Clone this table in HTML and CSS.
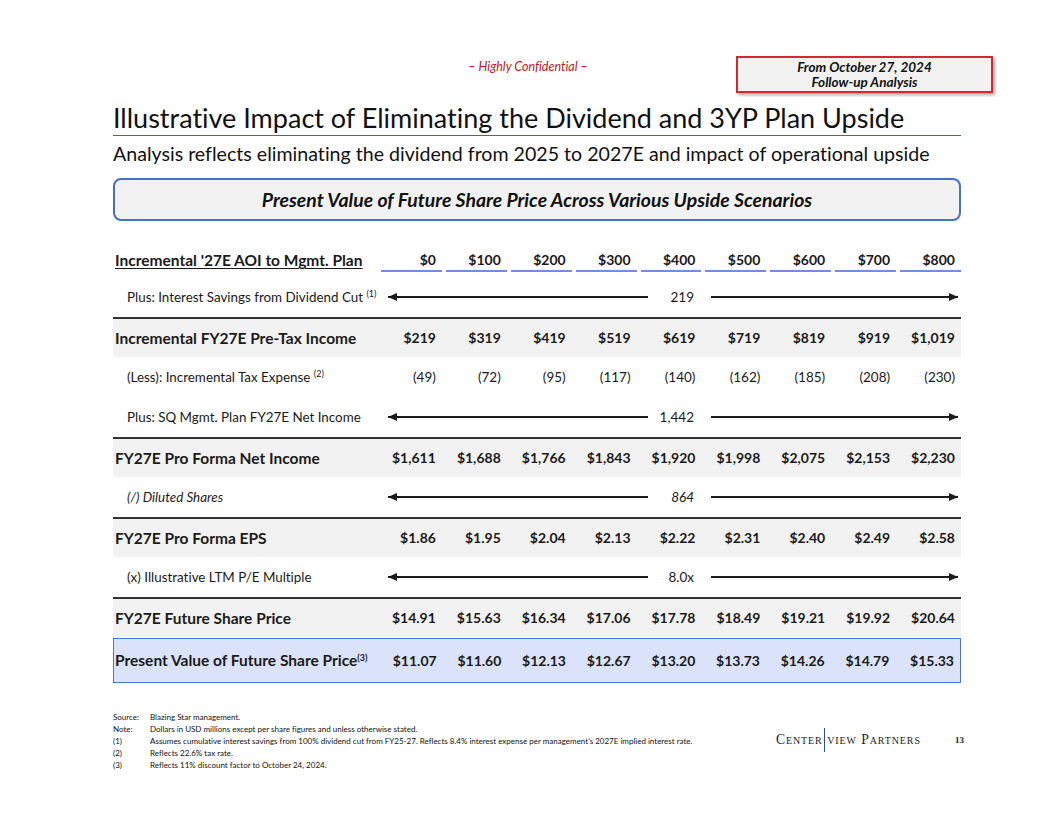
FILE: index.html
```html
<!DOCTYPE html>
<html lang="en">
<head>
<meta charset="utf-8">
<title>Illustrative Impact of Eliminating the Dividend</title>
<link rel="stylesheet" href="styles.css">
</head>
<body>
<div class="page">
  <header class="topbar">
    <div class="spacer"></div>
    <div class="confidential">– Highly Confidential –</div>
    <div class="stamp">From October 27, 2024<br>Follow-up Analysis</div>
  </header>

  <main class="content">
    <h1 class="title">Illustrative Impact of Eliminating the Dividend and 3YP Plan Upside</h1>
    <p class="subtitle">Analysis reflects eliminating the dividend from 2025 to 2027E and impact of operational upside</p>
    <div class="banner">Present Value of Future Share Price Across Various Upside Scenarios</div>

    <div class="table">
      <div class="row head">
        <div class="label"><span class="ul">Incremental '27E AOI to Mgmt. Plan</span></div>
        <div class="cell">$0</div><div class="cell">$100</div><div class="cell">$200</div>
        <div class="cell">$300</div><div class="cell">$400</div><div class="cell">$500</div>
        <div class="cell">$600</div><div class="cell">$700</div><div class="cell">$800</div>
      </div>

      <div class="row first">
        <div class="label sub">Plus: Interest Savings from Dividend Cut <sup>(1)</sup></div>
        <div class="span">
          <div class="arrow left"></div><div class="mid">219</div><div class="arrow right"></div>
        </div>
      </div>

      <div class="row total">
        <div class="label">Incremental FY27E Pre-Tax Income</div>
        <div class="cell">$219</div><div class="cell">$319</div><div class="cell">$419</div>
        <div class="cell">$519</div><div class="cell">$619</div><div class="cell">$719</div>
        <div class="cell">$819</div><div class="cell">$919</div><div class="cell">$1,019</div>
      </div>

      <div class="row">
        <div class="label sub">(Less): Incremental Tax Expense <sup>(2)</sup></div>
        <div class="cell reg">(49)</div><div class="cell reg">(72)</div><div class="cell reg">(95)</div>
        <div class="cell reg">(117)</div><div class="cell reg">(140)</div><div class="cell reg">(162)</div>
        <div class="cell reg">(185)</div><div class="cell reg">(208)</div><div class="cell reg">(230)</div>
      </div>

      <div class="row">
        <div class="label sub">Plus: SQ Mgmt. Plan FY27E Net Income</div>
        <div class="span">
          <div class="arrow left"></div><div class="mid">1,442</div><div class="arrow right"></div>
        </div>
      </div>

      <div class="row total">
        <div class="label">FY27E Pro Forma Net Income</div>
        <div class="cell">$1,611</div><div class="cell">$1,688</div><div class="cell">$1,766</div>
        <div class="cell">$1,843</div><div class="cell">$1,920</div><div class="cell">$1,998</div>
        <div class="cell">$2,075</div><div class="cell">$2,153</div><div class="cell">$2,230</div>
      </div>

      <div class="row">
        <div class="label sub it">(/) Diluted Shares</div>
        <div class="span">
          <div class="arrow left"></div><div class="mid it">864</div><div class="arrow right"></div>
        </div>
      </div>

      <div class="row total">
        <div class="label">FY27E Pro Forma EPS</div>
        <div class="cell">$1.86</div><div class="cell">$1.95</div><div class="cell">$2.04</div>
        <div class="cell">$2.13</div><div class="cell">$2.22</div><div class="cell">$2.31</div>
        <div class="cell">$2.40</div><div class="cell">$2.49</div><div class="cell">$2.58</div>
      </div>

      <div class="row">
        <div class="label sub">(x) Illustrative LTM P/E Multiple</div>
        <div class="span">
          <div class="arrow left"></div><div class="mid">8.0x</div><div class="arrow right"></div>
        </div>
      </div>

      <div class="row total">
        <div class="label">FY27E Future Share Price</div>
        <div class="cell">$14.91</div><div class="cell">$15.63</div><div class="cell">$16.34</div>
        <div class="cell">$17.06</div><div class="cell">$17.78</div><div class="cell">$18.49</div>
        <div class="cell">$19.21</div><div class="cell">$19.92</div><div class="cell">$20.64</div>
      </div>

      <div class="row pv">
        <div class="label">Present Value of Future Share Price<sup>(3)</sup></div>
        <div class="cell">$11.07</div><div class="cell">$11.60</div><div class="cell">$12.13</div>
        <div class="cell">$12.67</div><div class="cell">$13.20</div><div class="cell">$13.73</div>
        <div class="cell">$14.26</div><div class="cell">$14.79</div><div class="cell">$15.33</div>
      </div>
    </div>

    <footer class="footer">
      <div class="notes">
        <div class="note"><span>Source:</span><span>Blazing Star management.</span></div>
        <div class="note"><span>Note:</span><span>Dollars in USD millions except per share figures and unless otherwise stated.</span></div>
        <div class="note"><span>(1)</span><span>Assumes cumulative interest savings from 100% dividend cut from FY25-27. Reflects 8.4% interest expense per management’s 2027E implied interest rate.</span></div>
        <div class="note"><span>(2)</span><span>Reflects 22.6% tax rate.</span></div>
        <div class="note"><span>(3)</span><span>Reflects 11% discount factor to October 24, 2024.</span></div>
      </div>
      <div class="brand">
        <div class="logo"><span>Center</span><span class="bar"></span><span>view Partners</span></div>
        <div class="pagenum">13</div>
      </div>
    </footer>
  </main>
</div>
</body>
</html>
```

FILE: styles.css
```css
* { box-sizing: border-box; }

html, body {
  margin: 0;
  padding: 0;
  background: #ffffff;
}

body {
  font-family: Lato, "Open Sans", "DejaVu Sans", sans-serif;
  font-variant-ligatures: none;
  color: #1a1a1a;
}

.page {
  width: 1056px;
  height: 816px;
  overflow: hidden;
}

/* ---------- top bar ---------- */
.topbar {
  display: grid;
  grid-template-columns: 1fr auto 1fr;
  padding: 56px 63px 0 63px;
  align-items: start;
}

.confidential {
  margin-top: 4px;
  font-size: 12.5px;
  line-height: 14px;
  font-style: italic;
  color: #c0161e;
}

.stamp {
  justify-self: end;
  width: 257px;
  height: 37px;
  border: 2px solid #d9252b;
  background: #f2f2f2;
  box-shadow: 2px 2px 3px rgba(0, 0, 0, 0.35);
  font-size: 13.5px;
  line-height: 15px;
  font-weight: 700;
  font-style: italic;
  text-align: center;
  padding-top: 2px;
  color: #111;
}

/* ---------- content ---------- */
.content {
  width: 848px;
  margin-left: 113px;
}

.title {
  margin: 9px 0 0 0;
  font-size: 27px;
  line-height: 1.2;
  font-weight: 400;
  padding-bottom: 1px;
  border-bottom: 1.5px solid #2f6eb5;
  color: #111;
  white-space: nowrap;
}

.subtitle {
  margin: 6px 0 0 0;
  font-size: 19.6px;
  line-height: 1.2;
  color: #111;
  white-space: nowrap;
}

.banner {
  margin-top: 12px;
  height: 43px;
  border: 2px solid #4472c4;
  border-radius: 8px;
  background: #f2f2f2;
  display: flex;
  align-items: center;
  justify-content: center;
  font-size: 19.4px;
  font-weight: 700;
  font-style: italic;
  color: #111;
}

/* ---------- table ---------- */
.table {
  margin-top: 29px;
}

.row {
  display: grid;
  grid-template-columns: 264px repeat(9, 1fr);
  align-items: center;
  height: 40px;
  font-size: 14px;
  font-weight: 700;
}

.row.head {
  height: 22px;
  align-items: stretch;
}

.row.head .label {
  line-height: 20px;
  padding-left: 2px;
}

.ul {
  text-decoration: underline;
  text-underline-offset: 2px;
  text-decoration-thickness: 1px;
}

.row.head .cell {
  margin-left: 4px;
  line-height: 20px;
  border-bottom: 2px solid #6d8fdc;
}

.row.first {
  margin-top: 5px;
}

.label {
  padding-left: 2px;
  white-space: nowrap;
  font-size: 15.5px;
}

.label.sub {
  padding-left: 14px;
  font-weight: 400;
  font-size: 13.4px;
}

.it {
  font-style: italic;
}

.cell {
  text-align: right;
  padding-right: 6px;
  white-space: nowrap;
}

.cell.reg {
  font-weight: 400;
  font-size: 13.5px;
}

sup {
  font-size: 9px;
  line-height: 0;
  vertical-align: 5px;
}

.row.total {
  border-top: 2px solid #333;
  background: #f2f2f2;
}

.row.pv {
  margin-top: 1px;
  height: 45px;
  background: #dae3fa;
  border: 1.5px solid #4a74d6;
}

.row.pv .label {
  padding-left: 1px;
}

/* arrow rows */
.span {
  grid-column: 2 / span 9;
  display: flex;
  align-items: center;
  padding-left: 11px;
  padding-right: 3px;
  font-weight: 400;
  font-size: 13.5px;
}

.mid {
  width: 46px;
  text-align: right;
  margin-right: 17px;
}

.arrow {
  position: relative;
  height: 1.5px;
  background: #1a1a1a;
}

.arrow.left {
  width: 260px;
}

.arrow.right {
  flex: 1;
}

.arrow::after {
  content: "";
  position: absolute;
  top: -3.25px;
  border-top: 4px solid transparent;
  border-bottom: 4px solid transparent;
}

.arrow.left::after {
  left: 0;
  border-right: 9px solid #1a1a1a;
}

.arrow.right::after {
  right: 0;
  border-left: 9px solid #1a1a1a;
}

/* ---------- footer ---------- */
.footer {
  display: flex;
  align-items: flex-start;
  margin-top: 28px;
}

.notes {
  flex: none;
  width: 663px;
  font-size: 8px;
  line-height: 12px;
  color: #111;
}

.note {
  display: grid;
  grid-template-columns: 37px 1fr;
  white-space: nowrap;
}

.brand {
  flex: none;
  display: flex;
  align-items: center;
  margin-top: 17px;
  white-space: nowrap;
}

.logo {
  flex: none;
  display: flex;
  align-items: center;
  white-space: nowrap;
  font-family: "Liberation Serif", "DejaVu Serif", serif;
  font-variant: small-caps;
  font-size: 13.6px;
  letter-spacing: 0.9px;
  color: #222;
}

.logo .bar {
  flex: none;
  width: 1.5px;
  height: 24px;
  background: #2a4f9a;
  margin: 0 2px 0 1px;
}

.pagenum {
  flex: none;
  margin-left: 34px;
  font-family: "Liberation Serif", serif;
  font-size: 9px;
  font-weight: 700;
  color: #222;
}
```
